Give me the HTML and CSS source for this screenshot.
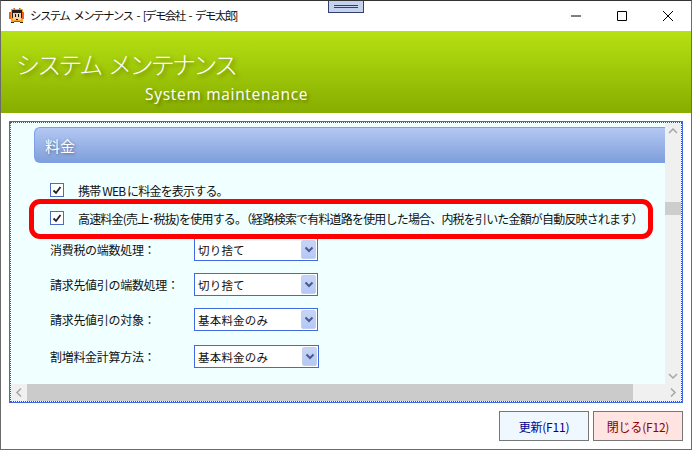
FILE: index.html
```html
<!DOCTYPE html>
<html lang="ja">
<head>
<meta charset="utf-8">
<title>システム メンテナンス</title>
<link rel="stylesheet" href="styles.css">
</head>
<body>
<div class="window">
  <div class="titlebar">
    <svg class="app-icon" width="16" height="16" viewBox="0 0 16 16" shape-rendering="crispEdges">
      <path fill="#f5a623" d="M2 1h2V0h2v1h4V0h2v1h2v3h1v7h-1v3H2v-3H0V4h2z"/>
      <path fill="#e8651a" d="M0 4h2v7H0zM13 4h2v7h-2zM5 0h1v2H5zM10 0h1v2h-1z"/>
      <path fill="#222" d="M3 2h10v3H3zM3 5h1v5H3zM12 5h1v5h-1z"/>
      <path fill="#f7cfa8" d="M4 5h8v7H4z"/>
      <path fill="#111" d="M6 6h1v3H6zM9 6h1v3H9zM7 11h2v1H7z"/>
      <path fill="#d33" d="M5 13h6v1H5z"/>
      <path fill="#3a2a12" d="M2 14h3v1H2zM11 14h3v1h-3z"/>
    </svg>
    <span class="title-text">システム メンテナンス - [デモ会社 - デモ太郎]</span>
    <div class="controls">
      <svg class="ctrl" width="46" height="30" viewBox="0 0 46 30"><path d="M18 15h10" stroke="#000" fill="none"/></svg>
      <svg class="ctrl" width="46" height="30" viewBox="0 0 46 30"><path d="M18.500 10.500h9v9h-9z" stroke="#000" fill="none"/></svg>
      <svg class="ctrl" width="46" height="30" viewBox="0 0 46 30"><path d="M18 10l10 10M28 10L18 20" stroke="#000" fill="none"/></svg>
    </div>
  </div>
  <header class="banner">
    <h1 class="banner-title">システム メンテナンス</h1>
    <p class="banner-sub">System maintenance</p>
  </header>
  <main class="main">
    <div class="panel">
      <div class="panel-inner">
        <div class="content">
          <h2 class="section">料金</h2>
          <label class="check-row check-first"><span class="check"><svg width="12" height="12" viewBox="0 0 12 12"><path d="M2.500 6.500l2.500 2.500 4.500-6" stroke="#222" stroke-width="1.800" fill="none"/></svg></span><span>携帯 WEB に料金を表示する。</span></label>
          <label class="check-row check-second"><span class="check"><svg width="12" height="12" viewBox="0 0 12 12"><path d="M2.500 6.500l2.500 2.500 4.500-6" stroke="#222" stroke-width="1.800" fill="none"/></svg></span><span>高速料金(売上･税抜)を使用する。（経路検索で有料道路を使用した場合、内税を引いた金額が自動反映されます）</span></label>
          <div class="field f1"><span class="field-label">消費税の端数処理：</span><div class="select"><span class="select-text">切り捨て</span><span class="select-btn"><svg width="10" height="7" viewBox="0 0 10 7"><path d="M1.500 1.500L5 5l3.500-3.500" stroke="#4a5a8a" stroke-width="2" fill="none"/></svg></span></div></div>
          <div class="field f2"><span class="field-label">請求先値引の端数処理：</span><div class="select"><span class="select-text">切り捨て</span><span class="select-btn"><svg width="10" height="7" viewBox="0 0 10 7"><path d="M1.500 1.500L5 5l3.500-3.500" stroke="#4a5a8a" stroke-width="2" fill="none"/></svg></span></div></div>
          <div class="field f3"><span class="field-label">請求先値引の対象：</span><div class="select"><span class="select-text">基本料金のみ</span><span class="select-btn"><svg width="10" height="7" viewBox="0 0 10 7"><path d="M1.500 1.500L5 5l3.500-3.500" stroke="#4a5a8a" stroke-width="2" fill="none"/></svg></span></div></div>
          <div class="field f4"><span class="field-label">割増料金計算方法：</span><div class="select select-wide"><span class="select-text">基本料金のみ</span><span class="select-btn"><svg width="10" height="7" viewBox="0 0 10 7"><path d="M1.500 1.500L5 5l3.500-3.500" stroke="#4a5a8a" stroke-width="2" fill="none"/></svg></span></div></div>
        </div>
        <div class="vscroll">
          <svg class="sb-btn" width="16" height="17" viewBox="0 0 16 17"><path d="M4 10L8 6l4 4" stroke="#a6a6a6" stroke-width="1.500" fill="none"/></svg>
          <div class="v-track"><div class="v-thumb"></div></div>
          <svg class="sb-btn" width="16" height="17" viewBox="0 0 16 17"><path d="M4 7l4 4 4-4" stroke="#a6a6a6" stroke-width="1.500" fill="none"/></svg>
        </div>
        <div class="hscroll">
          <svg class="sb-btn" width="16" height="17" viewBox="0 0 16 17"><path d="M10 4.500L6 8.500l4 4" stroke="#a6a6a6" stroke-width="1.500" fill="none"/></svg>
          <div class="h-thumb"></div>
          <svg class="sb-btn sb-end" width="32" height="17" viewBox="0 0 32 17"><path d="M22 4.500l4 4-4 4" stroke="#a6a6a6" stroke-width="1.500" fill="none"/></svg>
        </div>
      </div>
    </div>
  </main>
  <footer class="footer">
    <button class="btn btn-update">更新(F11)</button>
    <button class="btn btn-close">閉じる(F12)</button>
  </footer>
  <div class="tab-handle"><span></span></div>
  <div class="highlight"></div>
</div>
</body>
</html>
```
FILE: styles.css
```css
* { box-sizing: border-box; }
html, body { margin: 0; padding: 0; background: #fff; }
body { font-family: "Noto Sans CJK JP", "Noto Sans", sans-serif; font-size: 12px; color: #111; }
.window {
  position: relative;
  width: 692px;
  height: 450px;
  border: 1px solid #6b6b6b;
  border-top-color: #333;
  display: flex;
  flex-direction: column;
  overflow: hidden;
  background: #fff;
}
.titlebar { height: 30px; flex: none; display: flex; align-items: center; padding-left: 8px; background: #fff; }
.app-icon { flex: none; margin-top: -1px; }
.title-text { margin-left: 5px; font-size: 11.500px; letter-spacing: -1.6px; word-spacing: 3px; color: #111; margin-top: -2px; }
.controls { margin-left: auto; display: flex; margin-right: 0; }
.ctrl { display: block; margin-top: -1px; }
.banner {
  height: 82px;
  flex: none;
  background: linear-gradient(#b6e112, #87ad00);
  padding: 16px 0 0 15px;
  color: #fff;
}
.banner-title {
  margin: 0;
  font-size: 24px;
  font-weight: 300;
  line-height: 34px;
  letter-spacing: -2.7px;
  word-spacing: 5px;
  text-shadow: 2px 2px 4px rgba(60, 70, 0, .55);
}
.banner-sub {
  margin: 1px 0 0 129px;
  font-family: "Open Sans", sans-serif;
  font-size: 15.500px;
  line-height: 24px;
  letter-spacing: .7px;
  text-shadow: 2px 2px 3px rgba(60, 70, 0, .5);
}
.main { flex: none; height: 290px; padding: 8px 8px 0 8px; }
.panel { width: 674px; height: 282px; border: 1px solid #4169e1; background: #f0ffff; }
.panel-inner {
  height: 100%;
  border: 1px dotted #556;
  display: grid;
  grid-template-columns: 1fr 16px;
  grid-template-rows: 1fr 17px;
}
.content { padding: 4px 0 0 23px; overflow: hidden; background: #f0ffff; position: relative; }
.section {
  margin: 0;
  height: 36px;
  border: 1px solid #7c9fe6;
  border-right: 0;
  border-radius: 6px 0 0 6px;
  background: linear-gradient(#b4c8f3, #7f9fdb);
  color: #fff;
  font-size: 15px;
  font-weight: 400;
  line-height: 35px;
  padding-left: 10px;
  text-shadow: 1px 1px 3px rgba(50, 60, 90, .6);
}
.check-row { display: flex; align-items: center; height: 16px; margin-left: 16px; white-space: nowrap; font-size: 12px; letter-spacing: -0.82px; word-spacing: 0; }
.check-first { margin-top: 19px; }
.check-second { margin-top: 12px; }
.check {
  width: 14px;
  height: 14px;
  flex: none;
  border: 1px solid #4a6cc4;
  background: #fff;
  margin-right: 14px;
  display: flex;
  align-items: center;
  justify-content: center;
}
.field { display: flex; align-items: center; margin-left: 16px; height: 23px; }
.f1 { margin-top: 12px; }
.f2 { margin-top: 12px; }
.f3 { margin-top: 12px; }
.f4 { margin-top: 14px; }
.field-label { width: 144px; flex: none; font-size: 12px; letter-spacing: -0.3px; margin-top: -1px; white-space: nowrap; }
.select {
  width: 124px;
  height: 23px;
  border: 1px solid #4169e1;
  background: #fff;
  display: flex;
  align-items: center;
  justify-content: space-between;
  padding: 0 1px 0 3px;
}
.select-wide { width: 125px; }
.select-text { font-size: 11.500px; letter-spacing: .2px; }
.select-btn {
  width: 15px;
  height: 19px;
  border-radius: 2px;
  background: linear-gradient(#c6d4f6, #b5c8f5);
  border: 1px solid #c3d0ee;
  display: flex;
  align-items: center;
  justify-content: center;
}
.vscroll { background: #f0f0f0; display: flex; flex-direction: column; }
.sb-btn { display: block; flex: none; background: #f0f0f0; }
.v-track { flex: 1; position: relative; padding-top: 62px; }
.v-thumb { height: 13px; background: #cdcdcd; }
.hscroll { grid-column: 1 / 3; background: #f0f0f0; display: grid; grid-template-columns: 16px 606px 1fr; height: 17px; }
.h-thumb { height: 17px; background: #cbcbcb; }
.sb-end { justify-self: end; }
.footer { flex: 1; display: flex; justify-content: flex-end; gap: 4px; padding: 8px 8px 0 0; }
.btn {
  width: 90px;
  height: 30px;
  border: 1px solid #777;
  font-family: inherit;
  font-size: 12px;
  letter-spacing: -0.2px;
  padding: 0;
}
.btn-update { background: #f0f8ff; color: #00008b; }
.btn-close { background: #ffe4e1; color: #8b0000; }
.tab-handle {
  position: absolute;
  left: 327px;
  top: -1px;
  width: 36px;
  height: 13px;
  background: #c5d2ee;
  border: 1px solid #34406e;
  border-top: 0;
  padding: 5px 5px 0;
}
.tab-handle span { display: block; height: 3px; border-top: 1px solid #34406e; border-bottom: 1px solid #34406e; }
.highlight {
  position: absolute;
  left: 28px;
  top: 198px;
  width: 624px;
  height: 40px;
  border: 5px solid #f00;
  border-radius: 11px;
  pointer-events: none;
}
```
